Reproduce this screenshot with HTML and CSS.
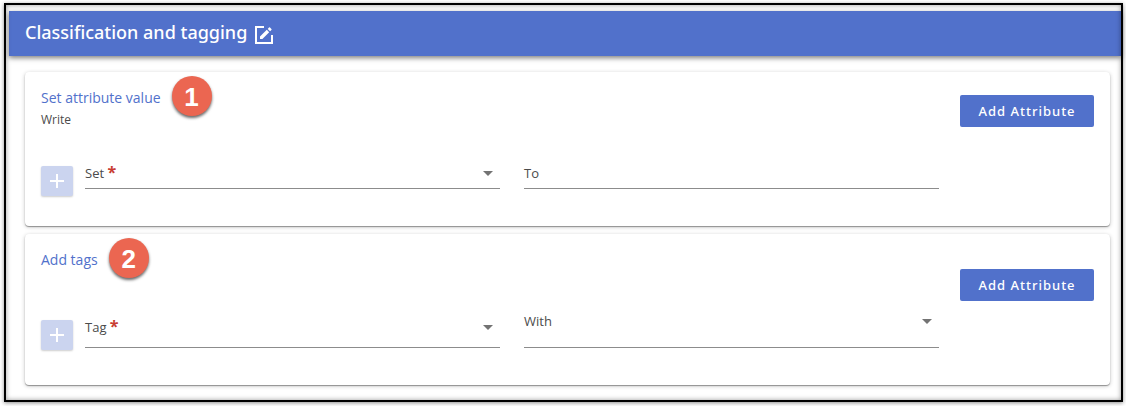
FILE: index.html
```html
<!DOCTYPE html>
<html lang="en">
    <head>
        <meta charset="utf-8">
        <title>Classification and tagging</title>
        <link rel="stylesheet" href="styles.css">
    </head>
    <body>
        <div class="frame">
            <header class="header">
                <h1 class="header-title">Classification and tagging</h1>
                <button class="edit-button" aria-label="Edit">
                    <svg width="18" height="18" viewBox="0 0 18 18">
                        <path d="M9 1H1v16h16V9" fill="none" stroke="white" stroke-width="2"/>
                        <path d="M5 10.600V13h2.400L14.200 6.200 11.800 3.800zM12.700 2.900l1.300-1.300q.5-.5 1 0l1.400 1.400q.5.5 0 1l-1.300 1.300z" fill="white"/>
                    </svg>
                </button>
            </header>

            <main class="content">
                <section class="card">
                    <div class="card-body">
                        <h2 class="card-title">Set attribute value<span class="badge">1</span></h2>
                        <p class="card-subtitle">Write</p>
                        <div class="row">
                            <button class="plus-button" aria-label="Add attribute row" disabled>
                                <svg width="14" height="14" viewBox="0 0 14 14"><path d="M7 0v14M0 7h14" stroke="white" stroke-width="2"/></svg>
                            </button>
                            <div class="field">
                                <label for="set">Set <span class="required">*</span></label>
                                <select id="set" required><option value=""></option></select>
                                <svg class="arrow" width="10" height="5" viewBox="0 0 10 5"><path d="M0 0h10L5 5z"/></svg>
                            </div>
                            <div class="field">
                                <label for="to">To</label>
                                <input id="to" type="text">
                            </div>
                        </div>
                    </div>
                    <button class="add-button">Add Attribute</button>
                </section>

                <section class="card card-tags">
                    <div class="card-body">
                        <h2 class="card-title">Add tags<span class="badge">2</span></h2>
                        <div class="row">
                            <button class="plus-button" aria-label="Add tag row" disabled>
                                <svg width="14" height="14" viewBox="0 0 14 14"><path d="M7 0v14M0 7h14" stroke="white" stroke-width="2"/></svg>
                            </button>
                            <div class="field field-tag">
                                <label for="tag">Tag <span class="required">*</span></label>
                                <select id="tag" required><option value=""></option></select>
                                <svg class="arrow" width="10" height="5" viewBox="0 0 10 5"><path d="M0 0h10L5 5z"/></svg>
                            </div>
                            <div class="field field-with">
                                <label for="with">With</label>
                                <select id="with"><option value=""></option></select>
                                <svg class="arrow" width="10" height="5" viewBox="0 0 10 5"><path d="M0 0h10L5 5z"/></svg>
                            </div>
                        </div>
                    </div>
                    <button class="add-button">Add Attribute</button>
                </section>
            </main>
        </div>
    </body>
</html>
```
FILE: styles.css
```css
*{
    box-sizing: border-box;
}
body{
    margin: 0;
    background-color: white;
    color: rgb(75,75,75);
    font-family: "Open Sans", sans-serif;
    font-size: 13px;
}
h1,
h2,
p{
    margin: 0;
}
button{
    font-family: inherit;
    border: none;
    padding: 0;
    cursor: pointer;
}
svg{
    display: block;
}
.frame{
    position: relative;
    margin: 3px 3px 4px 4px;
    padding: 6px 0 0 3px;
    border: 2px solid black;
    box-shadow: 0 1px 4px rgba(0,0,0,0.45);
}
/* inner shadow lies over the header too */
.frame::after{
    content: "";
    position: absolute;
    inset: 0;
    box-shadow: inset 0 0 5px rgba(0,0,0,0.4);
    pointer-events: none;
}
.header{
    display: flex;
    align-items: flex-start;
    gap: 8px;
    height: 45px;
    padding: 9px 16px;
    background-color: rgb(81,113,203);
    box-shadow: 0 2px 5px rgba(0,0,0,0.5);
}
.header-title{
    color: white;
    font-family: "Noto Sans", "Open Sans", sans-serif;
    font-size: 18px;
    font-weight: 500;
    line-height: 24px;
}
.edit-button{
    background-color: transparent;
    margin-top: 6px;
}
.content{
    display: flex;
    flex-direction: column;
    gap: 8px;
    padding: 16px 11px 15px 16px;
}
.card{
    display: flex;
    align-items: flex-start;
    gap: 21px;
    padding: 16px 16px 30px;
    background-color: white;
    border-radius: 4px;
    box-shadow: 0 1px 1px rgba(0,0,0,0.35), 0 1px 4px rgba(0,0,0,0.22);
}
.card-tags{
    padding-bottom: 35px;
}
.card-body{
    flex: 1;
}
.card-title{
    position: relative;
    width: fit-content;
    color: rgb(81,113,203);
    font-size: 14px;
    font-weight: 400;
    line-height: 20px;
}
.card-subtitle{
    font-size: 12px;
    line-height: 24px;
}
.badge{
    position: absolute;
    left: 100%;
    top: -12px;
    width: 40px;
    height: 40px;
    margin-left: 11px;
    border-radius: 50%;
    background-color: rgb(235,102,81);
    box-shadow: 0 2px 3px rgba(0,0,0,0.6);
    color: white;
    font-family: "Liberation Sans", Arial, sans-serif;
    font-size: 26px;
    font-weight: bold;
    line-height: 42px;
    text-align: center;
}
.row{
    display: flex;
    align-items: flex-start;
    margin-top: 31px;
}
.card-tags .row{
    margin-top: 41px;
}
.plus-button{
    display: flex;
    align-items: center;
    justify-content: center;
    width: 32px;
    height: 30px;
    margin: 3px 12px 0 0;
    border-radius: 2px;
    background-color: rgb(203,212,239);
    box-shadow: 0 1px 2px rgba(0,0,0,0.2);
}
.card-tags .plus-button{
    margin-top: 9px;
}
.field{
    display: flex;
    align-items: center;
    flex: 1;
    min-width: 0;
    padding-bottom: 5px;
    border-bottom: 1px solid rgb(140,140,140);
    line-height: 20px;
}
.field + .field{
    margin-left: 24px;
}
.field-tag{
    margin-top: 6px;
    padding-bottom: 10px;
}
.field-with{
    padding-bottom: 16px;
}
.field select,
.field input{
    flex: 1;
    min-width: 0;
    height: 20px;
    padding: 0;
    border: none;
    outline: none;
    background-color: transparent;
    font: inherit;
    appearance: none;
}
.required{
    color: rgb(200,60,50);
    font-size: 16px;
    font-weight: 700;
    line-height: 16px;
}
.arrow{
    margin: 0 7px 0 -17px;
    fill: rgb(115,115,115);
    pointer-events: none;
}
.add-button{
    width: 134px;
    height: 32px;
    margin-top: 7px;
    border-radius: 2px;
    background-color: rgb(81,113,203);
    color: white;
    font-family: "Noto Sans", "Open Sans", sans-serif;
    font-size: 13px;
    font-weight: 500;
    letter-spacing: 1px;
}
.card-tags .add-button{
    margin-top: 19px;
}
```
